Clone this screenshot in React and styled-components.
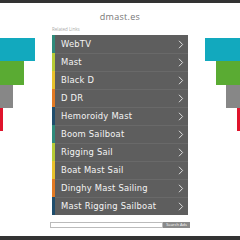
import React from "react";
import styled, { createGlobalStyle } from "styled-components";

const GlobalStyle = createGlobalStyle`
  html, body {
    margin: 0;
    padding: 0;
    background: #fff;
  }
  body {
    font-family: "Open Sans", "Liberation Sans", sans-serif;
  }
`;

const Page = styled.div`
  width: 240px;
  height: 240px;
  display: flex;
  flex-direction: column;
  overflow: hidden;
`;

const TopBar = styled.div`
  height: 3px;
  background: #333;
`;

const BottomBar = styled.div`
  height: 4px;
  background: #333;
`;

const Main = styled.div`
  flex: 1;
  display: flex;
`;

const Decor = styled.div`
  width: 50px;
  padding-top: 35px;
  display: flex;
  flex-direction: column;
  align-items: ${(p) => (p.$side === "left" ? "flex-start" : "flex-end")};
`;

const DecorBar = styled.div`
  height: ${(p) => p.$h}px;
  width: ${(p) => p.$w}px;
  background: ${(p) => p.$color};
`;

const Center = styled.div`
  width: 140px;
  display: flex;
  flex-direction: column;
  padding-top: 8px;
`;

const Title = styled.div`
  text-align: center;
  font-size: 9px;
  line-height: 12px;
  color: #777;
  letter-spacing: 0.3px;
`;

const RelatedLabel = styled.div`
  margin-top: 3px;
  margin-left: 2px;
  font-size: 4.5px;
  line-height: 6px;
  color: #aaa;
`;

const Panel = styled.div`
  margin: 3px 2px 0 2px;
  background: #5e5e5e;
  display: flex;
  flex-direction: column;
`;

const Row = styled.div`
  height: 18px;
  display: flex;
  align-items: center;
  border-left: 3px solid ${(p) => p.$accent};
  box-sizing: border-box;
  padding: 0 4px 0 6px;
  color: #f4f4f4;
  font-family: "DejaVu Sans", "Open Sans", sans-serif;
  font-size: 8.4px;
  letter-spacing: 0.2px;
  & + & {
    box-shadow: inset 0 1px 0 rgba(255, 255, 255, 0.07);
  }
`;

const RowLabel = styled.span`
  flex: 1;
  white-space: nowrap;
`;

const Chevron = () => (
  <svg width="6" height="9" viewBox="0 0 6 9">
    <path d="M1 0.8 L4.6 4.5 L1 8.2" fill="none" stroke="#ddd" strokeWidth="1" />
  </svg>
);

const SearchRow = styled.div`
  margin-top: 7px;
  display: flex;
  height: 6px;
`;

const SearchInput = styled.div`
  flex: 1;
  border: 1px solid #bbb;
  box-sizing: border-box;
  background: #fff;
`;

const SearchButton = styled.div`
  width: 27px;
  background: #8a8a8a;
  color: #fff;
  font-size: 4px;
  line-height: 6px;
  text-align: center;
  white-space: nowrap;
`;

const accents = ["#2e8a7a", "#b6cb34", "#e8c22c", "#e27a24", "#1f4d6c"];

const links = [
  "WebTV",
  "Mast",
  "Black D",
  "D DR",
  "Hemoroidy Mast",
  "Boom Sailboat",
  "Rigging Sail",
  "Boat Mast Sail",
  "Dinghy Mast Sailing",
  "Mast Rigging Sailboat",
];

const decorBars = [
  { color: "#12a9be", h: 23, w: [35, 35] },
  { color: "#5aab33", h: 24, w: [24, 24] },
  { color: "#878787", h: 23, w: [13, 14] },
  { color: "#e0142c", h: 23, w: [3, 3] },
];

export default function App() {
  return (
    <Page>
      <GlobalStyle />
      <TopBar />
      <Main>
        <Decor $side="left">
          {decorBars.map((b) => (
            <DecorBar key={b.color} $color={b.color} $h={b.h} $w={b.w[0]} />
          ))}
        </Decor>
        <Center>
          <Title>dmast.es</Title>
          <RelatedLabel>Related Links</RelatedLabel>
          <Panel>
            {links.map((l, i) => (
              <Row key={l} $accent={accents[i % accents.length]}>
                <RowLabel>{l}</RowLabel>
                <Chevron />
              </Row>
            ))}
          </Panel>
          <SearchRow>
            <SearchInput />
            <SearchButton>Search Ads</SearchButton>
          </SearchRow>
        </Center>
        <Decor $side="right">
          {decorBars.map((b) => (
            <DecorBar key={b.color} $color={b.color} $h={b.h} $w={b.w[1]} />
          ))}
        </Decor>
      </Main>
      <BottomBar />
    </Page>
  );
}
